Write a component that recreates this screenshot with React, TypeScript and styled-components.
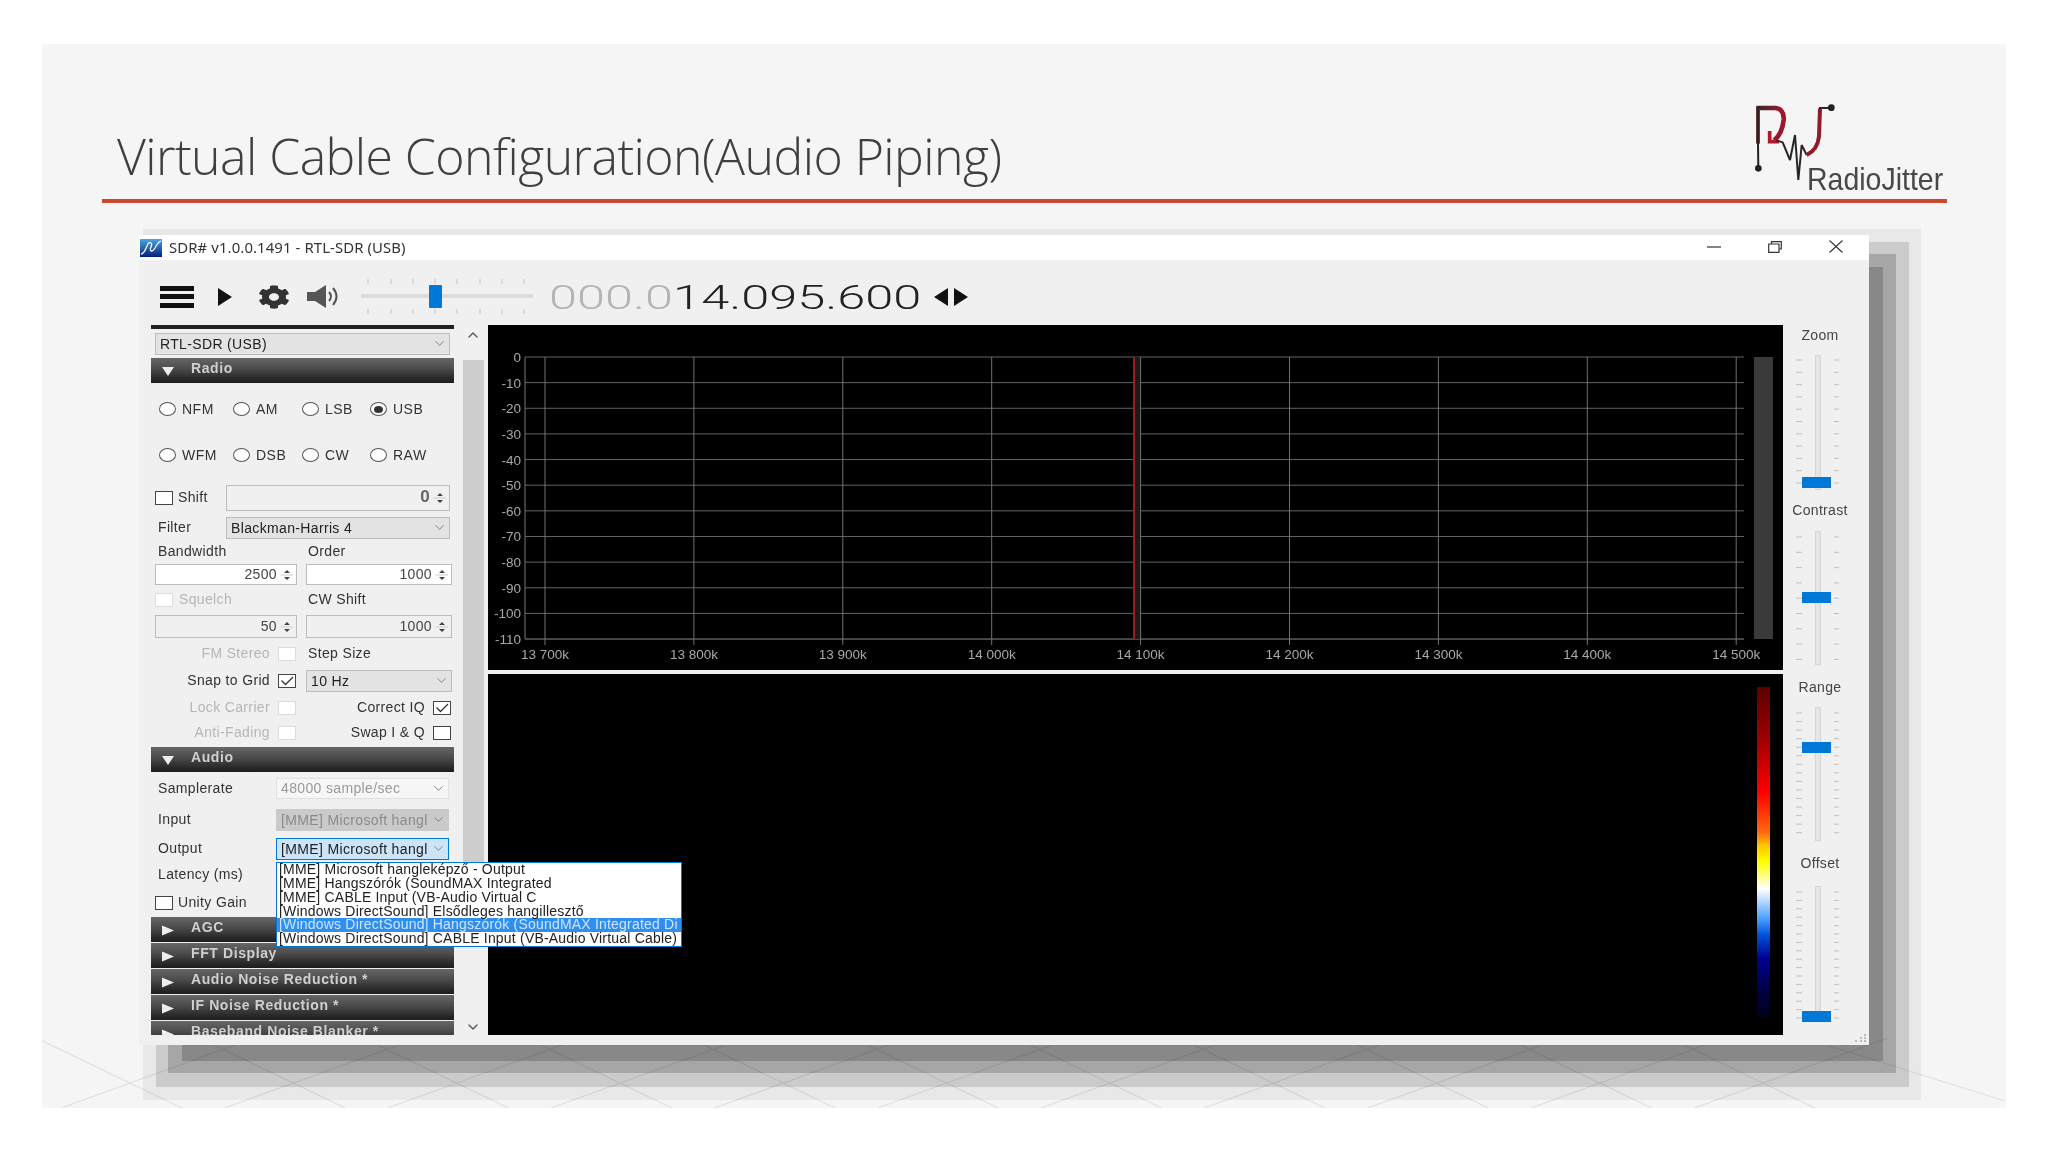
import React from "react";
import styled, { createGlobalStyle } from "styled-components";
import { FaCog } from "react-icons/fa";
import { ChevronDown, ChevronUp } from "lucide-react";

const Global = createGlobalStyle`
  html, body { margin: 0; padding: 0; background: #fff; }
  body { font-family: "Liberation Sans", Arial, sans-serif; width: 2048px; height: 1152px; overflow: hidden; }
  * { box-sizing: border-box; }
`;

const Slide = styled.div`
  position: relative;
  isolation: isolate;
  width: 1964px;
  height: 1064px;
  margin: 44px 0 0 42px;
  background: #f5f5f6;
  overflow: hidden;
  filter: blur(0.45px);
`;
const Floor = styled.svg`
  position: absolute;
  left: 0;
  bottom: 0;
  z-index: 0;
`;
const TitleText = styled.h1`
  margin: 0;
  padding: 77px 0 0 75px;
  height: 155px;
  font: 300 50px/70px "Open Sans", sans-serif;
  letter-spacing: -0.56px;
  color: #3f3f3f;
  white-space: nowrap;
  position: relative;
  z-index: 2;
`;
const Rule = styled.div`
  position: relative;
  z-index: 2;
  width: 1845px;
  height: 4px;
  margin-left: 60px;
  background: #c8492e;
`;
const LogoBox = styled.div`
  position: absolute;
  z-index: 2;
  left: 1713px;
  top: 59px;
  width: 190px;
  height: 92px;
`;
const LogoText = styled.span`
  position: absolute;
  left: 52px;
  top: 56px;
  font: 400 32px/40px "Liberation Sans", sans-serif;
  color: #484848;
  transform: scaleX(0.89);
  transform-origin: left center;
  white-space: nowrap;
`;

const WindowArea = styled.div`
  position: relative;
  z-index: 1;
  width: 1730px;
  height: 810px;
  margin: 32px 0 0 97px;
`;
const ShadowBand = styled.div<{ $l: number; $t: number; $r: number; $b: number; $a: number }>`
  position: absolute;
  left: ${(p) => p.$l}px;
  top: ${(p) => p.$t}px;
  right: ${(p) => p.$r}px;
  bottom: ${(p) => p.$b}px;
  background: rgba(0, 0, 0, ${(p) => p.$a});
`;
const Win = styled.div`
  position: relative;
  width: 100%;
  height: 100%;
  background: #f0f0f0;
  display: flex;
  flex-direction: column;
`;
const TitleBar = styled.div`
  height: 25px;
  flex: none;
  background: #fff;
  display: flex;
  align-items: center;
  padding-left: 1px;
`;
const WinTitle = styled.span`
  margin: -2px 0 0 7px;
  font: 400 14.9px/20px "Noto Sans", sans-serif;
  letter-spacing: 0.1px;
  color: #333;
`;
const WinButtons = styled.div`
  margin-left: auto;
  display: flex;
  align-items: center;
  gap: 47px;
  padding: 0 26px 2px 0;
`;
const Toolbar = styled.div`
  height: 65px;
  flex: none;
  display: flex;
  align-items: center;
  padding: 8px 0 0 21px;
`;
const Burger = styled.div`
  width: 34px;
  height: 22px;
  display: flex;
  flex-direction: column;
  justify-content: space-between;
  & > i { display: block; height: 5px; background: #111; }
`;
const ToolIcon = styled.span<{ $ml: number }>`
  display: flex;
  margin-left: ${(p) => p.$ml}px;
  color: #333;
`;
const TuneSlider = styled.div`
  position: relative;
  width: 172px;
  height: 36px;
  margin-left: 21px;
`;
const TuneThumb = styled.div`
  position: absolute;
  left: 68px;
  top: 6px;
  width: 13px;
  height: 23px;
  background: #0078d7;
  border-radius: 1px;
`;
const FreqBox = styled.div`
  width: 369px;
  margin-left: 16px;
  padding-top: 2px;
  font: 300 33px/36px Roboto, sans-serif;
  color: #222;
  white-space: nowrap;
  transform: scaleX(1.53);
  transform-origin: left center;
`;
const FreqDim = styled.span`
  color: #b4b4b4;
`;

const Main = styled.div`
  flex: none;
  display: flex;
  height: 710px;
  padding-left: 12px;
`;
const Panel = styled.div`
  width: 303px;
  height: 710px;
  overflow: hidden;
  flex: none;
  font-size: 14px;
  letter-spacing: 0.35px;
  color: #333;
`;
const TopEdge = styled.div`
  height: 4px;
  background: #222;
`;
const Row = styled.div<{ $mt?: number; $h: number }>`
  display: flex;
  align-items: center;
  height: ${(p) => p.$h}px;
  margin-top: ${(p) => p.$mt ?? 0}px;
  padding: 0 4px 0 4px;
`;
const Cols = styled.div<{ $mt?: number; $h: number }>`
  display: grid;
  grid-template-columns: 142px 146px;
  column-gap: 9px;
  align-items: center;
  height: ${(p) => p.$h}px;
  margin-top: ${(p) => p.$mt ?? 0}px;
  padding-left: 4px;
`;
const Cell = styled.div<{ $end?: boolean }>`
  display: flex;
  align-items: center;
  justify-content: ${(p) => (p.$end ? "flex-end" : "flex-start")};
  gap: ${(p) => (p.$end ? 8 : 6)}px;
  padding-right: ${(p) => (p.$end ? 1 : 0)}px;
  min-width: 0;
`;
const Label = styled.span<{ $off?: boolean; $w?: number; $pl?: number }>`
  color: ${(p) => (p.$off ? "#b6b6b6" : "#333")};
  white-space: nowrap;
  ${(p) => (p.$w ? `width: ${p.$w}px; flex: none;` : "")}
  padding-left: ${(p) => p.$pl ?? 0}px;
  margin-top: -2px;
`;
const CheckBox = styled.span<{ $off?: boolean }>`
  flex: none;
  display: flex;
  width: 18px;
  height: 14px;
  background: #fff;
  border: 1px solid ${(p) => (p.$off ? "#dcdcdc" : "#444")};
`;
const SelectBox = styled.div<{ $w?: number; $h: number; $bg: string; $bd: string; $fg: string }>`
  position: relative;
  display: flex;
  align-items: center;
  justify-content: space-between;
  width: ${(p) => (p.$w ? `${p.$w}px` : "100%")};
  height: ${(p) => p.$h}px;
  flex: ${(p) => (p.$w ? "none" : "1 1 auto")};
  background: ${(p) => p.$bg};
  border: 1px solid ${(p) => p.$bd};
  color: ${(p) => p.$fg};
  padding: 0 2px 1px 4px;
  white-space: nowrap;
  & > svg { flex: none; color: #777; }
`;
const SpinBox = styled.div<{ $w?: number; $h: number; $bg: string }>`
  display: flex;
  align-items: center;
  justify-content: flex-end;
  width: ${(p) => (p.$w ? `${p.$w}px` : "100%")};
  flex: ${(p) => (p.$w ? "none" : "1 1 auto")};
  height: ${(p) => p.$h}px;
  background: ${(p) => p.$bg};
  border: 1px solid #bcbcbc;
  padding: 0 2px 2px 0;
  color: #444;
`;
const BigZero = styled.span`
  font-size: 17px;
  font-weight: 700;
  color: #666;
`;
const SpinArrows = styled.svg`
  margin: 2px 0 0 3px;
  flex: none;
`;
const Header = styled.div<{ $mt?: number }>`
  display: flex;
  align-items: center;
  flex: none;
  height: 25px;
  margin-top: ${(p) => p.$mt ?? 0}px;
  padding: 0 0 5px 10px;
  background: linear-gradient(#666 0%, #4d4d4d 40%, #2b2b2b 80%, #1c1c1c 100%);
  color: #cfcfcf;
  font-weight: 700;
  font-size: 14px;
  letter-spacing: 0.6px;
`;
const HeaderArrow = styled.svg`
  flex: none;
  margin-top: 5px;
`;
const HeaderText = styled.span`
  margin-left: 16px;
  white-space: nowrap;
`;
const RadioGrid = styled.div`
  display: grid;
  grid-template-columns: 74px 69px 68px 70px;
  grid-auto-rows: 22px;
  row-gap: 24px;
  margin-top: 15px;
  padding-left: 8px;
  letter-spacing: 0.5px;
`;
const RadioItem = styled.label`
  display: flex;
  align-items: center;
  gap: 6px;
  white-space: nowrap;
`;
const RadioDot = styled.span<{ $on?: boolean }>`
  flex: none;
  display: flex;
  align-items: center;
  justify-content: center;
  width: 17px;
  height: 14px;
  border-radius: 50%;
  border: 1px solid #555;
  background: #fff;
  &::after {
    content: "";
    display: ${(p) => (p.$on ? "block" : "none")};
    width: 9px;
    height: 7px;
    border-radius: 50%;
    background: #333;
  }
`;
const AnchorBox = styled.div`
  position: absolute;
  left: 137px;
  top: 606px;
  width: 406px;
  height: 22px;
  font-size: 14px;
`;
const DropList = styled.div`
  position: absolute;
  left: 0;
  top: 21px;
  z-index: 5;
  width: 406px;
  height: 85px;
  background: #fff;
  border: 1.5px solid #0078d7;
  overflow: hidden;
`;
const DropItem = styled.div<{ $sel?: boolean }>`
  height: 13.85px;
  line-height: 13.85px;
  padding-left: 2px;
  white-space: nowrap;
  letter-spacing: 0.2px;
  font-size: 14px;
  color: ${(p) => (p.$sel ? "#cfe4ff" : "#222")};
  background: ${(p) => (p.$sel ? "#2f8ff0" : "transparent")};
`;
const ScrollCol = styled.div`
  position: relative;
  width: 22px;
  margin-left: 8px;
  flex: none;
  display: flex;
  flex-direction: column;
  align-items: center;
  justify-content: space-between;
  color: #555;
  padding: 2px 0 0;
`;
const ScrollThumb = styled.div`
  position: absolute;
  left: 1px;
  right: 0;
  top: 35px;
  height: 540px;
  background: #cdcdcd;
`;
const Display = styled.div`
  width: 1295px;
  margin-left: 4px;
  flex: none;
  display: flex;
  flex-direction: column;
  gap: 4px;
`;
const Spectrum = styled.svg`
  display: block;
  background: #000;
  flex: none;
`;
const Waterfall = styled.div`
  height: 361px;
  flex: none;
  background: #000;
  display: flex;
  justify-content: flex-end;
  padding: 13px 13px 17px;
`;
const ColorBar = styled.div`
  width: 13px;
  background: linear-gradient(
    #5a0000 0%,
    #a00000 16%,
    #ff0000 32%,
    #ff6a10 44%,
    #ffc800 48%,
    #ffff00 53%,
    #ffffff 61%,
    #4aa0ff 70%,
    #0050d8 75%,
    #000090 82%,
    #000040 92%,
    #000018 100%
  );
`;
const SideCol = styled.div`
  width: 86px;
  flex: none;
`;
const SliderName = styled.div<{ $mt: number }>`
  height: 20px;
  margin-top: ${(p) => p.$mt}px;
  line-height: 20px;
  font-size: 14px;
  letter-spacing: 0.3px;
  padding-right: 12px;
  text-align: center;
  color: #444;
`;
const VSlider = styled.div<{ $mt: number; $h: number }>`
  position: relative;
  height: ${(p) => p.$h}px;
  margin-top: ${(p) => p.$mt}px;
`;
const VThumb = styled.div<{ $top: number }>`
  position: absolute;
  left: 19px;
  top: ${(p) => p.$top}px;
  width: 29px;
  height: 11px;
  background: #0078d7;
`;
const Grip = styled.svg`
  position: absolute;
  right: 2px;
  bottom: 2px;
`;

const Check = () => (
  <svg width="16" height="12" viewBox="0 0 16 12">
    <path d="M2.5 5.5 L6.5 9.5 L14 2" fill="none" stroke="#333" strokeWidth="1.3" />
  </svg>
);
const Spin = () => (
  <SpinArrows width="14" height="16" viewBox="0 0 14 16">
    <path d="M4 6 L7 3 L10 6Z M4 10 L7 13 L10 10Z" fill="#444" />
    <path d="M0.5 8 H13" stroke="#ccc" strokeWidth="1" />
  </SpinArrows>
);
const Chev = () => <ChevronDown size={15} strokeWidth={1.4} />;

const Section = ({ children, open, mt }: { children: string; open?: boolean; mt?: number }) => (
  <Header $mt={mt}>
    <HeaderArrow width="14" height="12" viewBox="0 0 14 12">
      {open ? <path d="M1 2 H13 L7 11Z" fill="#eee" /> : <path d="M1 1.5 L13 6.5 L1 11.5Z" fill="#eee" />}
    </HeaderArrow>
    <HeaderText>{children}</HeaderText>
  </Header>
);

const yLabels = ["0", "-10", "-20", "-30", "-40", "-50", "-60", "-70", "-80", "-90", "-100", "-110"];
const xLabels = ["13 700k", "13 800k", "13 900k", "14 000k", "14 100k", "14 200k", "14 300k", "14 400k", "14 500k"];
const sliders = [
  { name: "Zoom", nameMt: 0, mt: 10, h: 135, first: 5, step: 12.3, n: 11, thumb: 122 },
  { name: "Contrast", nameMt: 10, mt: 11, h: 134, first: 6, step: 15.3, n: 9, thumb: 61 },
  { name: "Range", nameMt: 12, mt: 10, h: 134, first: 6, step: 8.55, n: 15, thumb: 35 },
  { name: "Offset", nameMt: 12, mt: 13, h: 136, first: 6, step: 8.4, n: 16, thumb: 125 },
];
const dropItems = [
  "[MME] Microsoft hangleképző - Output",
  "[MME] Hangszórók (SoundMAX Integrated",
  "[MME] CABLE Input (VB-Audio Virtual C",
  "[Windows DirectSound] Elsődleges hangillesztő",
  "[Windows DirectSound] Hangszórók (SoundMAX Integrated Di",
  "[Windows DirectSound] CABLE Input (VB-Audio Virtual Cable)",
];
const floorCross = Array.from({ length: 11 }, (_, i) => 88 + 163.3 * i);

const Logo = () => (
  <LogoBox>
    <svg width="190" height="92" viewBox="0 0 570 276">
      <defs>
        <linearGradient id="rg" x1="0" y1="0" x2="1" y2="1">
          <stop offset="0" stopColor="#2a2a2a" />
          <stop offset="0.5" stopColor="#a8162e" />
          <stop offset="1" stopColor="#8a1a28" />
        </linearGradient>
      </defs>
      <path d="M9 120 L10 196" fill="none" stroke="#222" strokeWidth="6" />
      <circle cx="10" cy="196" r="10" fill="#222" />
      <path d="M9 10 V122" fill="none" stroke="#3a1a1e" strokeWidth="11" />
      <path d="M5 15 H62 Q88 18 86 50 Q82 90 58 112" fill="none" stroke="url(#rg)" strokeWidth="14" />
      <path d="M44 84 V116 H72" fill="none" stroke="#b0182e" strokeWidth="11" />
      <path d="M64 112 L83 118 L105 171 L120 96 L130 231 L140 126 L155 156" fill="none" stroke="#262626" strokeWidth="6" strokeLinejoin="bevel" />
      <path d="M155 156 Q188 140 192 100 L195 16" fill="none" stroke="#8f1a2a" strokeWidth="12" />
      <path d="M192 15 H230" fill="none" stroke="#2a2a2a" strokeWidth="6" />
      <circle cx="229" cy="14" r="10" fill="#222" />
    </svg>
    <LogoText>RadioJitter</LogoText>
  </LogoBox>
);

const DropAnchor = () => (
  <AnchorBox>
    <DropList>
      {dropItems.map((t, i) => (
        <DropItem key={t} $sel={i === 4}>{t}</DropItem>
      ))}
    </DropList>
  </AnchorBox>
);

export default function App() {
  return (
    <>
      <Global />
      <Slide>
        <Floor width="1964" height="70" viewBox="0 0 1964 70">
          <g stroke="#e1e1e3" strokeWidth="1.3" fill="none">
            {floorCross.map((c) => (
              <g key={c}>
                <path d={`M${c - 100} -3 L${c + 52} 70`} />
                <path d={`M${c - 69} 70 L${c + 125} 0`} />
              </g>
            ))}
            <path d="M1781 6 L1963 63" />
          </g>
        </Floor>
        <TitleText>Virtual Cable Configuration(Audio Piping)</TitleText>
        <Rule />
        <Logo />
        <WindowArea>
          <ShadowBand $l={4} $t={-6} $r={-52} $b={-55} $a={0.05} />
          <ShadowBand $l={17} $t={7} $r={-40} $b={-42} $a={0.12} />
          <ShadowBand $l={29} $t={19} $r={-27} $b={-28} $a={0.18} />
          <ShadowBand $l={43} $t={32} $r={-14} $b={-16} $a={0.18} />
          <Win>
            <TitleBar>
              <svg width="22" height="18" viewBox="0 0 22 18">
                <defs>
                  <linearGradient id="ic" x1="0" y1="0" x2="0" y2="1">
                    <stop offset="0" stopColor="#4aa6e6" />
                    <stop offset="1" stopColor="#04207a" />
                  </linearGradient>
                </defs>
                <rect width="22" height="18" fill="url(#ic)" />
                <path d="M1 15 C5 15 6 8 8 5 C10 2 13 4 11 8 C9 12 12 14 15 9 C17 5 18 3 21 2" fill="none" stroke="#fff" strokeWidth="1.3" />
              </svg>
              <WinTitle>SDR# v1.0.0.1491 - RTL-SDR (USB)</WinTitle>
              <WinButtons>
                <svg width="14" height="14" viewBox="0 0 14 14"><path d="M0 7 H14" stroke="#333" strokeWidth="1.2" /></svg>
                <svg width="14" height="12" viewBox="0 0 14 12"><path d="M3.5 2.5 V0.7 H13.3 V8 H11 M0.7 3 H11 V11.3 H0.7Z" fill="none" stroke="#333" strokeWidth="1.2" /></svg>
                <svg width="14" height="13" viewBox="0 0 14 13"><path d="M0.5 0.5 L13.5 12.5 M13.5 0.5 L0.5 12.5" stroke="#333" strokeWidth="1.1" /></svg>
              </WinButtons>
            </TitleBar>
            <Toolbar>
              <Burger><i /><i /><i /></Burger>
              <ToolIcon $ml={24}>
                <svg width="14" height="18" viewBox="0 0 14 18"><path d="M0 0 L14 9 L0 18Z" fill="#111" /></svg>
              </ToolIcon>
              <ToolIcon $ml={26}>
                <FaCog size={32} style={{ height: 24 }} preserveAspectRatio="none" />
              </ToolIcon>
              <ToolIcon $ml={17}>
                <svg width="33" height="23" viewBox="0 0 33 23">
                  <path d="M0 7 H8 L19 0 V23 L8 16 H0Z" fill="#555" />
                  <path d="M22 7 Q26 11.5 22 16" fill="none" stroke="#555" strokeWidth="2" />
                  <path d="M26 3 Q33 11.5 26 20" fill="none" stroke="#555" strokeWidth="2" />
                </svg>
              </ToolIcon>
              <TuneSlider>
                <svg width="172" height="36" viewBox="0 0 172 36">
                  <rect x="0" y="15" width="172" height="4" fill="#dcdcdc" />
                  {[7, 30, 52, 74, 96, 119, 141, 163].map((x) => (
                    <g key={x} stroke="#c4c4c4" strokeWidth="1">
                      <path d={`M${x} 0 V5`} />
                      <path d={`M${x} 30 V35`} />
                    </g>
                  ))}
                </svg>
                <TuneThumb />
              </TuneSlider>
              <FreqBox><FreqDim>000.0</FreqDim>14.095.600</FreqBox>
              <ToolIcon $ml={16}>
                <svg width="34" height="18" viewBox="0 0 34 18">
                  <path d="M14 0 V18 L0 9Z M20 0 V18 L34 9Z" fill="#111" />
                </svg>
              </ToolIcon>
            </Toolbar>
            <Main>
              <Panel>
                <TopEdge />
                <Row $mt={4} $h={22}>
                  <SelectBox $h={22} $bg="#e3e3e3" $bd="#bcbcbc" $fg="#222">RTL-SDR (USB)<Chev /></SelectBox>
                </Row>
                <Section open mt={3}>Radio</Section>
                <RadioGrid>
                  {["NFM", "AM", "LSB", "USB", "WFM", "DSB", "CW", "RAW"].map((t) => (
                    <RadioItem key={t}><RadioDot $on={t === "USB"} />{t}</RadioItem>
                  ))}
                </RadioGrid>
                <Row $mt={19} $h={26}>
                  <CheckBox />
                  <Label $w={53} $pl={5}>Shift</Label>
                  <SpinBox $h={26} $bg="#f0f0f0"><BigZero>0</BigZero><Spin /></SpinBox>
                </Row>
                <Row $mt={6} $h={22}>
                  <Label $w={71} $pl={3}>Filter</Label>
                  <SelectBox $h={22} $bg="#e3e3e3" $bd="#bcbcbc" $fg="#222">Blackman-Harris 4<Chev /></SelectBox>
                </Row>
                <Cols $mt={4} $h={18}>
                  <Label $pl={3}>Bandwidth</Label>
                  <Label $pl={2}>Order</Label>
                </Cols>
                <Cols $mt={3} $h={21}>
                  <SpinBox $h={21} $bg="#fff">2500<Spin /></SpinBox>
                  <SpinBox $h={21} $bg="#fff">1000<Spin /></SpinBox>
                </Cols>
                <Cols $mt={5} $h={20}>
                  <Cell><CheckBox $off /><Label $off>Squelch</Label></Cell>
                  <Label $pl={2}>CW Shift</Label>
                </Cols>
                <Cols $mt={5} $h={23}>
                  <SpinBox $h={23} $bg="#f0f0f0">50<Spin /></SpinBox>
                  <SpinBox $h={23} $bg="#f0f0f0">1000<Spin /></SpinBox>
                </Cols>
                <Cols $mt={6} $h={20}>
                  <Cell $end><Label $off>FM Stereo</Label><CheckBox $off /></Cell>
                  <Label $pl={2}>Step Size</Label>
                </Cols>
                <Cols $mt={6} $h={22}>
                  <Cell $end><Label>Snap to Grid</Label><CheckBox><Check /></CheckBox></Cell>
                  <SelectBox $h={22} $bg="#e3e3e3" $bd="#bcbcbc" $fg="#222">10 Hz<Chev /></SelectBox>
                </Cols>
                <Cols $mt={6} $h={20}>
                  <Cell $end><Label $off>Lock Carrier</Label><CheckBox $off /></Cell>
                  <Cell $end><Label>Correct IQ</Label><CheckBox><Check /></CheckBox></Cell>
                </Cols>
                <Cols $mt={5} $h={20}>
                  <Cell $end><Label $off>Anti-Fading</Label><CheckBox $off /></Cell>
                  <Cell $end><Label>Swap I &amp; Q</Label><CheckBox /></Cell>
                </Cols>
                <Section open mt={4}>Audio</Section>
                <Row $mt={6} $h={21}>
                  <Label $w={121} $pl={3}>Samplerate</Label>
                  <SelectBox $w={173} $h={21} $bg="#f6f6f6" $bd="#e0e0e0" $fg="#9a9a9a">48000 sample/sec<Chev /></SelectBox>
                </Row>
                <Row $mt={10} $h={22}>
                  <Label $w={121} $pl={3}>Input</Label>
                  <SelectBox $w={173} $h={22} $bg="#cacaca" $bd="#cacaca" $fg="#8a8a8a">[MME] Microsoft hangl<Chev /></SelectBox>
                </Row>
                <Row $mt={7} $h={22}>
                  <Label $w={121} $pl={3}>Output</Label>
                  <SelectBox $w={173} $h={22} $bg="#cce4f7" $bd="#0078d7" $fg="#222">
                    [MME] Microsoft hangl<Chev />
                  </SelectBox>
                </Row>
                <Row $mt={5} $h={20}>
                  <Label $pl={3}>Latency (ms)</Label>
                </Row>
                <Row $mt={8} $h={20}>
                  <CheckBox />
                  <Label $pl={5}>Unity Gain</Label>
                </Row>
                <Section mt={4}>AGC</Section>
                <Section mt={1}>FFT Display</Section>
                <Section mt={1}>Audio Noise Reduction *</Section>
                <Section mt={1}>IF Noise Reduction *</Section>
                <Section mt={1}>Baseband Noise Blanker *</Section>
              </Panel>
              <ScrollCol>
                <ScrollThumb />
                <ChevronUp size={16} strokeWidth={2} />
                <ChevronDown size={16} strokeWidth={2} />
              </ScrollCol>
              <Display>
                <Spectrum width="1295" height="345" viewBox="0 0 1295 345">
                  <rect x="1266" y="32" width="19" height="282" fill="#3a3a3a" />
                  {yLabels.map((t, i) => {
                    const y = 32 + i * 25.64;
                    return (
                      <g key={t}>
                        <path d={`M37 ${y} H1256`} stroke={i === 11 ? "#8a8a8a" : "#646464"} strokeWidth="1" />
                        <text x="33" y={y + 5} textAnchor="end" fill="#a8a8a8" fontFamily="Liberation Sans" fontSize="13.5">{t}</text>
                      </g>
                    );
                  })}
                  <path d="M37 32 V314" stroke="#777" strokeWidth="1" />
                  {xLabels.map((t, i) => {
                    const x = 57 + i * 148.9;
                    return (
                      <g key={t}>
                        <path d={`M${x} 32 V320`} stroke="#727272" strokeWidth="1" />
                        <text x={x} y="334" textAnchor="middle" fill="#a8a8a8" fontFamily="Liberation Sans" fontSize="13.5">{t}</text>
                      </g>
                    );
                  })}
                  <rect x="645" y="32" width="2" height="282" fill="#a51818" />
                  <rect x="647" y="32" width="5" height="282" fill="#1a1a1a" />
                </Spectrum>
                <Waterfall><ColorBar /></Waterfall>
              </Display>
              <SideCol>
                {sliders.map((s) => (
                  <React.Fragment key={s.name}>
                    <SliderName $mt={s.nameMt}>{s.name}</SliderName>
                    <VSlider $mt={s.mt} $h={s.h}>
                      <svg width="86" height={s.h} viewBox={`0 0 86 ${s.h}`}>
                        <rect x="32.5" y="0.5" width="5" height={s.h - 1} fill="#e6e6e6" stroke="#d6d6d6" />
                        {Array.from({ length: s.n }, (_, i) => s.first + i * s.step).map((y) => (
                          <g key={y} stroke="#c0c0c0" strokeWidth="1">
                            <path d={`M13 ${y} H19`} />
                            <path d={`M51 ${y} H56`} />
                          </g>
                        ))}
                      </svg>
                      <VThumb $top={s.thumb} />
                    </VSlider>
                  </React.Fragment>
                ))}
              </SideCol>
            </Main>
            <Grip width="14" height="10" viewBox="0 0 14 10">
              <path d="M11 1h2v2h-2z M7 4h2v2H7z M11 4h2v2h-2z M2 7h2v2H2z M7 7h2v2H7z M11 7h2v2h-2z" fill="#bbb" />
            </Grip>
          </Win>
          <DropAnchor />
        </WindowArea>
      </Slide>
    </>
  );
}
